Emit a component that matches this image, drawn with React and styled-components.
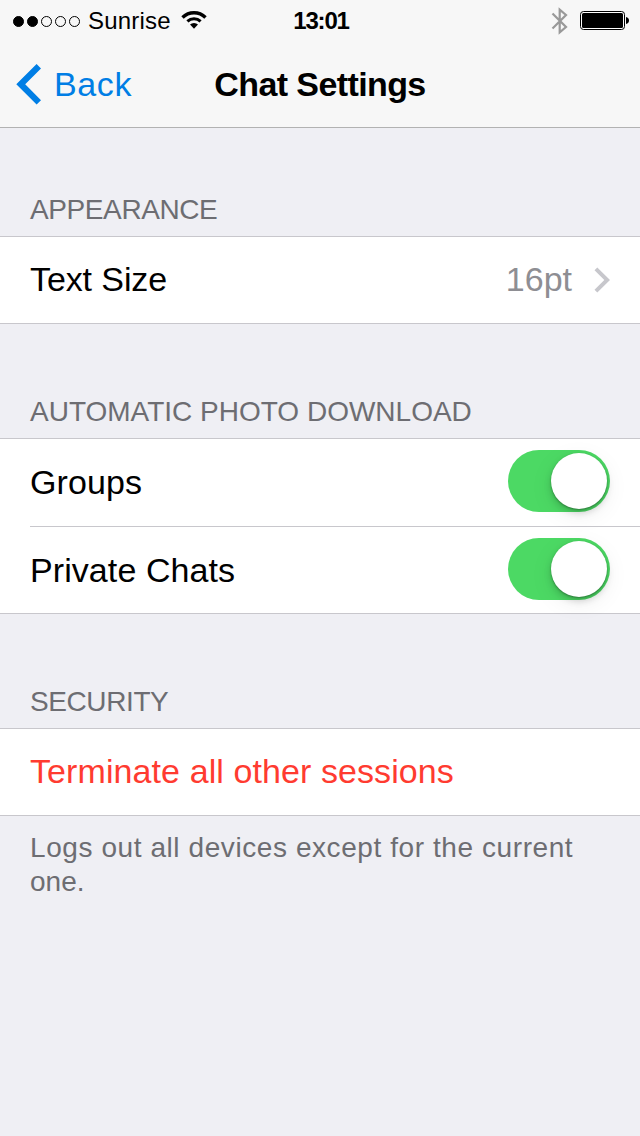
import React from 'react';
import styled, { createGlobalStyle } from 'styled-components';

const GlobalStyle = createGlobalStyle`
  * { box-sizing: border-box; }
  html, body { margin: 0; padding: 0; background: #efeff4; }
  body { font-family: "Liberation Sans", Arial, sans-serif; color: #000; }
`;

const Screen = styled.div`
  width: 640px;
  height: 1136px;
  overflow: hidden;
  background: #efeff4;
`;

const TopBar = styled.header`
  height: 128px;
  background: #f7f7f7;
  border-bottom: 1px solid #b2b2b2;
`;

const Label = styled.span`
  white-space: nowrap;
  letter-spacing: ${(p) => p.$track || 0}px;
`;

const BoldLabel = styled(Label)`
  font-weight: 700;
`;

const StatusBar = styled.div`
  height: 40px;
  display: grid;
  grid-template-columns: 1fr auto 1fr;
  align-items: center;
  padding: 1px 11px 0 13px;
  font-size: 24px;
  line-height: 40px;
`;

const StatusLeft = styled.div`
  display: flex;
  align-items: center;
`;

const StatusRight = styled(StatusLeft)`
  justify-content: flex-end;
  gap: 12px;
`;

const Signal = styled.div`
  display: flex;
  gap: 3px;
  margin-right: 8px;
`;

const SignalDot = styled.i`
  width: 11px;
  height: 11px;
  border-radius: 50%;
  border: 1px solid #000;
  background: ${(p) => (p.$on ? '#000' : 'transparent')};
`;

const WifiIcon = styled.svg`
  margin-left: 10px;
`;

const NavBar = styled.nav`
  height: 87px;
  display: grid;
  grid-template-columns: 1fr auto 1fr;
  align-items: center;
  padding: 0 16px;
  font-size: 34px;
  line-height: 84px;
`;

const BackButton = styled.a`
  display: flex;
  align-items: center;
  gap: 13px;
  color: #007ee5;
`;

const GroupTitle = styled.h2`
  margin: 0;
  height: ${(p) => p.$height}px;
  padding: 0 30px 9px;
  display: flex;
  align-items: flex-end;
  font-size: 28px;
  line-height: 34px;
  font-weight: 400;
  color: #6d6d72;
`;

const Group = styled.section`
  background: #fff;
  border-top: 1px solid #c8c7cc;
  border-bottom: 1px solid #c8c7cc;
`;

const Row = styled.div`
  height: 86px;
  margin-left: 30px;
  padding-right: 30px;
  display: flex;
  align-items: center;
  justify-content: space-between;
  font-size: 34px;
  line-height: 84px;
  padding-bottom: ${(p) => p.$lift || 0}px;
  color: ${(p) => (p.$danger ? '#ff3b30' : '#000')};

  & + & {
    height: 87px;
    border-top: 1px solid #c8c7cc;
  }
`;

const TallRow = styled(Row)`
  height: 87px;
`;

const Value = styled.div`
  display: flex;
  align-items: center;
  gap: 22px;
  color: #8e8e93;
`;

const DisclosureIcon = styled.svg`
  margin-top: 2px;
`;

const Switch = styled.div`
  width: 102px;
  height: 62px;
  margin-bottom: ${(p) => p.$drop}px;
  border-radius: 31px;
  background: #4cd964;
  padding: 3px;
  display: flex;
  justify-content: flex-end;
`;

const Knob = styled.div`
  width: 56px;
  height: 56px;
  border-radius: 50%;
  background: #fff;
  box-shadow: 0 1px 2px rgba(0, 0, 0, 0.3), 0 4px 7px rgba(0, 0, 0, 0.17),
    0 6px 24px rgba(0, 0, 0, 0.07);
`;

const Footnote = styled.p`
  margin: 0;
  padding: 15px 30px 0;
  display: flex;
  flex-direction: column;
  font-size: 28px;
  line-height: 34px;
  color: #6d6d72;
`;

function Toggle({ drop }) {
  return (
    <Switch role="switch" aria-checked="true" $drop={drop}>
      <Knob />
    </Switch>
  );
}

export default function App() {
  return (
    <Screen>
      <GlobalStyle />
      <TopBar>
        <StatusBar>
          <StatusLeft>
            <Signal>
              {[1, 1, 0, 0, 0].map((on, i) => (
                <SignalDot key={i} $on={on} />
              ))}
            </Signal>
            <Label $track={0.2}>Sunrise</Label>
            <WifiIcon width="26" height="20" viewBox="0 1 26 20">
              <g fill="none" stroke="#000">
                <path d="M1.5 7.5 A16.3 16.3 0 0 1 24.5 7.5" strokeWidth="3.4" />
                <path d="M6.4 11.4 A9.6 9.6 0 0 1 19.6 11.4" strokeWidth="3" />
              </g>
              <path d="M13 18.8 L9 14.6 A5.6 5.6 0 0 1 17 14.6 Z" />
            </WifiIcon>
          </StatusLeft>
          <BoldLabel $track={-1.2}>13:01</BoldLabel>
          <StatusRight>
            <svg width="17" height="28" viewBox="0 0 17 28">
              <path
                d="M1.5 6.5 L15 20 L8.7 25.3 V2.7 L15 8 L1.5 21.5"
                fill="none"
                stroke="#999"
                strokeWidth="2.2"
              />
            </svg>
            <svg width="49" height="20" viewBox="0 0 49 20">
              <rect x="0.5" y="0.5" width="44" height="18" rx="3" fill="#fff" stroke="#000" />
              <rect x="2" y="2" width="41" height="15" rx="1.5" />
              <path d="M46 6 Q49 6.6 49 9.5 Q49 12.4 46 13 Z" />
            </svg>
          </StatusRight>
        </StatusBar>
        <NavBar>
          <BackButton>
            <svg width="25" height="42" viewBox="0 0 25 42">
              <path d="M0.3 21.3 L20.6 1 L25 5.4 L9.2 21.3 L25 37.2 L20.6 41.6 Z" fill="#007ee5" />
            </svg>
            <Label $track={0.6}>Back</Label>
          </BackButton>
          <BoldLabel $track={-0.6}>Chat Settings</BoldLabel>
          <span />
        </NavBar>
      </TopBar>

      <GroupTitle $height={108}>
        <Label $track={-0.4}>APPEARANCE</Label>
      </GroupTitle>
      <Group>
        <Row $lift={2}>
          <Label $track={-0.1}>Text Size</Label>
          <Value>
            <Label>16pt</Label>
            <DisclosureIcon width="16" height="26" viewBox="0 0 16 26">
              <path d="M0.5 3.2 L3.3 0.4 L16 13 L3.3 25.6 L0.5 22.8 L10.3 13 Z" fill="#c7c7cc" />
            </DisclosureIcon>
          </Value>
        </Row>
      </Group>

      <GroupTitle $height={114}>
        <Label>AUTOMATIC PHOTO DOWNLOAD</Label>
      </GroupTitle>
      <Group>
        <TallRow $lift={2}>
          <Label $track={0.1}>Groups</Label>
          <Toggle drop={1} />
        </TallRow>
        <Row>
          <Label $track={0.08}>Private Chats</Label>
          <Toggle drop={3} />
        </Row>
      </Group>

      <GroupTitle $height={114}>
        <Label $track={-0.4}>SECURITY</Label>
      </GroupTitle>
      <Group>
        <Row $danger $lift={2}>
          <Label $track={0.09}>Terminate all other sessions</Label>
        </Row>
      </Group>
      <Footnote>
        <Label $track={0.58}>Logs out all devices except for the current</Label>
        <Label>one.</Label>
      </Footnote>
    </Screen>
  );
}
